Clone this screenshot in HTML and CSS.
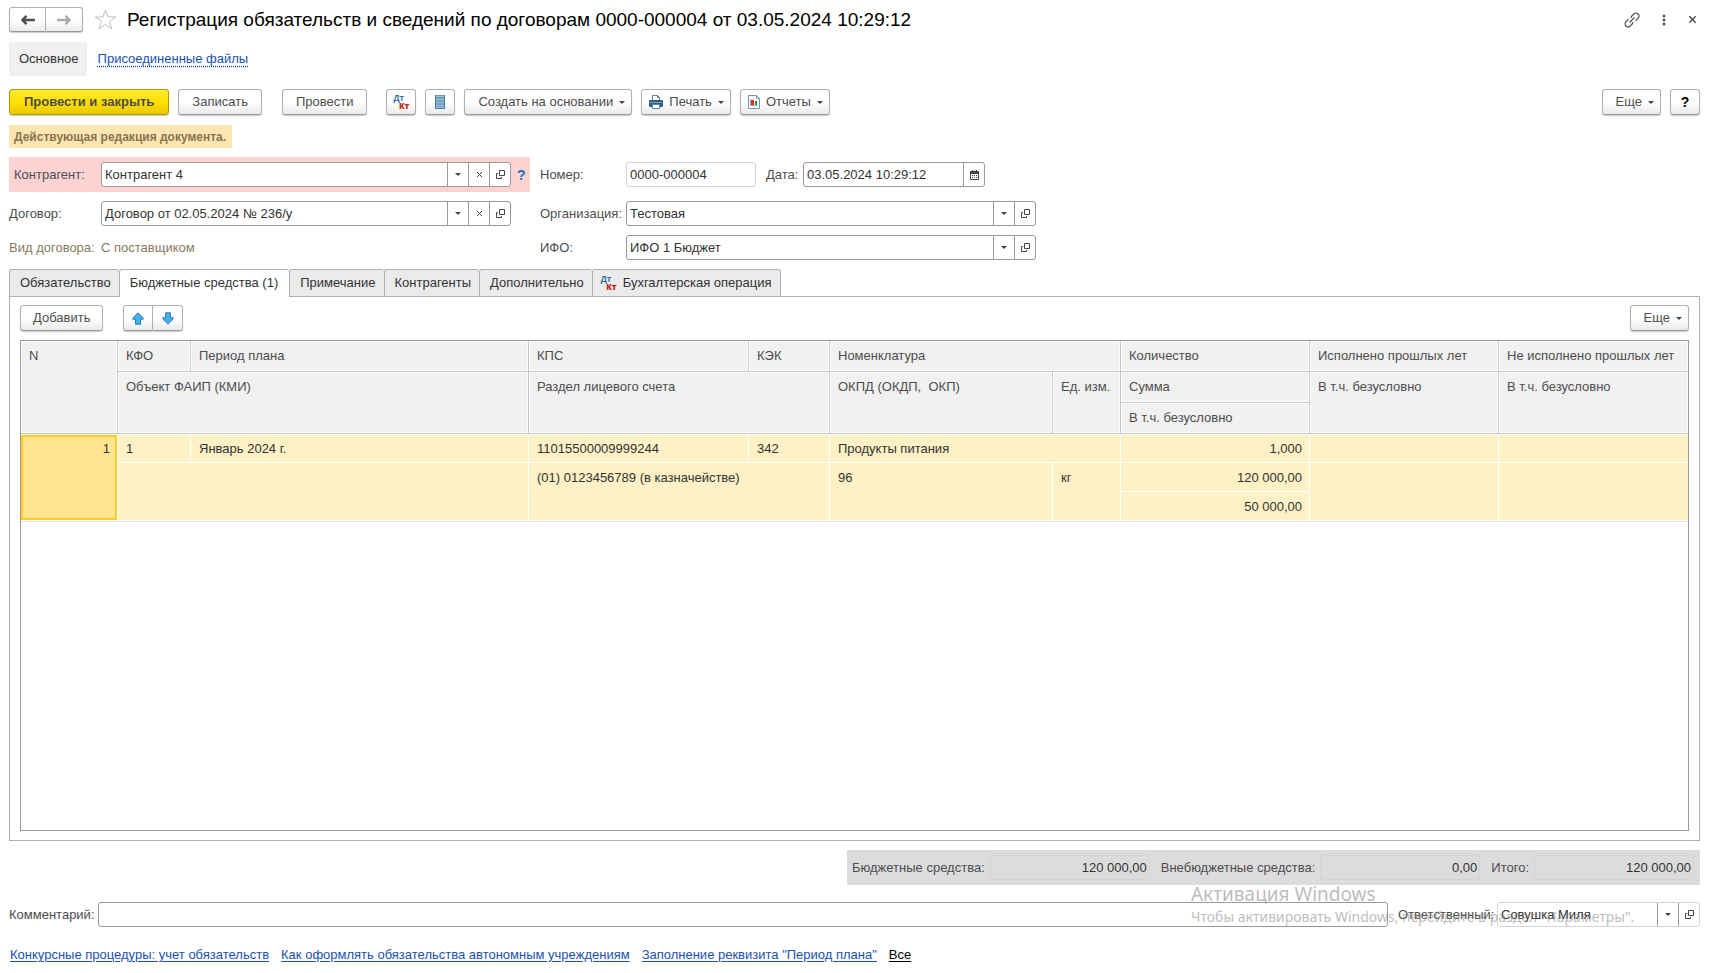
FILE: index.html
```html
<!DOCTYPE html>
<html lang="ru">

<head>
    <meta charset="UTF-8">
    <meta name="viewport" content="width=device-width, initial-scale=1.0">
    <title>Регистрация обязательств и сведений по договорам</title>
    <link rel="stylesheet" href="styles.css">
</head>

<body>
    <!-- icons -->
    <svg class="sprite" aria-hidden="true">
        <symbol id="i-open" viewBox="0 0 11 11">
            <path d="M4.500 1.500h5v5h-5zM3 4.500H1.500v5h5V8" fill="none" stroke="#444" />
        </symbol>
        <symbol id="i-clear" viewBox="0 0 7 7">
            <path d="M1 1l5 5M6 1l-5 5" fill="none" stroke="#444" />
        </symbol>
        <symbol id="i-list" viewBox="0 0 10 14">
            <path d="M0 0h10v14H0z" fill="#4b7ea4" />
            <path d="M1 1.500h8M1 4.500h8M1 7.500h8M1 10.500h8" stroke="#9cc0da" stroke-width="2" />
            <path d="M1 12.500h8" stroke="#9cc0da" />
        </symbol>
        <symbol id="i-print" viewBox="0 0 14 14">
            <path d="M3.500 6V.5h5l2 2V6" fill="#fff" stroke="#5a7f9c" />
            <path d="M8.500 .5v2h2" fill="none" stroke="#5a7f9c" />
            <rect y="5" width="14" height="7" rx="1" fill="#2f6089" />
            <path d="M1 7.500h12" stroke="#7ba3c2" />
            <path d="M3.500 9.500h7v4h-7z" fill="#fff" stroke="#5a7f9c" />
        </symbol>
        <symbol id="i-report" viewBox="0 0 12 14">
            <path d="M.5 .5h8l3 3v10H.5z" fill="#fff" stroke="#7893a8" />
            <path d="M8.500 .5v3h3" fill="none" stroke="#7893a8" />
            <path d="M2.500 4v6.500h7" fill="none" stroke="#9ab" />
            <path d="M3 5h3v5H3z" fill="#f0281e" />
            <path d="M7 6h2v4H7z" fill="#169a2e" />
        </symbol>
        <symbol id="i-calendar" viewBox="0 0 9 10">
            <path d="M.5 1.500h8v8h-8z" fill="#fff" stroke="#444" />
            <path d="M0 1h9v3H0z" fill="#444" />
            <path d="M2.500 0v2M6.500 0v2" stroke="#444" />
            <path d="M2 5.500h5M2 7.500h5" stroke="#444" stroke-dasharray="1 1" />
        </symbol>
        <symbol id="i-up" viewBox="0 0 12 13">
            <path d="M6 .8l5.200 5.400v1H8.500v5h-5v-5H.8v-1z" fill="#45b0ee" stroke="#2d7fb3" />
        </symbol>
        <symbol id="i-back" viewBox="0 0 14 10">
            <path d="M5.500 .8L1.500 5l4 4.200M2 5h12" fill="none" stroke="currentColor" stroke-width="2.400" />
        </symbol>
    </svg>

    <div class="page">
        <header class="header">
            <div class="btn-group nav">
                <button class="btn" aria-label="Назад"><svg width="14" height="10"><use href="#i-back" /></svg></button>
                <button class="btn forward" aria-label="Вперед"><svg width="14" height="10"><use href="#i-back" /></svg></button>
            </div>
            <button class="plain star" aria-label="В избранное">
                <svg width="23" height="23" viewBox="0 0 24 23">
                    <path d="M12 1.500l2.600 7.300 7.900.1-6.300 4.700 2.300 7.700L12 16.800l-6.500 4.500 2.300-7.700-6.300-4.700 7.900-.1z" fill="#fff" stroke="#b4bac2" />
                </svg>
            </button>
            <h1>Регистрация обязательств и сведений по договорам 0000-000004 от 03.05.2024 10:29:12</h1>
            <div class="window-tools">
                <button class="plain" aria-label="Получить ссылку">
                    <svg width="16" height="16" viewBox="0 0 16 16">
                        <g transform="rotate(-45 8 8)" fill="none" stroke="#555" stroke-width="1.200">
                            <path d="M6 5H2.500a3 3 0 0 0-3 3 3 3 0 0 0 3 3H6l1-1M10 11h3.500a3 3 0 0 0 3-3 3 3 0 0 0-3-3H10L9 6M4.500 8h7" />
                        </g>
                    </svg>
                </button>
                <button class="plain" aria-label="Меню">
                    <svg width="4" height="12" viewBox="0 0 4 12" fill="#555">
                        <circle cx="2" cy="2" r="1.500" />
                        <circle cx="2" cy="6" r="1.500" />
                        <circle cx="2" cy="10" r="1.500" />
                    </svg>
                </button>
                <button class="plain" aria-label="Закрыть"><svg width="9" height="9"><use href="#i-clear" /></svg></button>
            </div>
        </header>

        <nav class="sections">
            <span class="current">Основное</span>
            <a href="#files">Присоединенные файлы</a>
        </nav>

        <div class="toolbar">
            <button class="btn primary">Провести и закрыть</button>
            <button class="btn">Записать</button>
            <button class="btn post">Провести</button>
            <button class="btn icon-btn" aria-label="Проводки"><span class="dtkt"><i>Дт</i><b>Кт</b></span></button>
            <button class="btn icon-btn" aria-label="Список"><svg width="10" height="14"><use href="#i-list" /></svg></button>
            <button class="btn menu">Создать на основании</button>
            <button class="btn menu with-icon"><svg width="14" height="14"><use href="#i-print" /></svg>Печать</button>
            <button class="btn menu with-icon"><svg width="12" height="14"><use href="#i-report" /></svg>Отчеты</button>
            <button class="btn menu push">Еще</button>
            <button class="btn icon-btn help">?</button>
        </div>

        <div class="notice">Действующая редакция документа.</div>

        <div class="fields">
            <div class="col-left">
                <div class="row required">
                    <label for="contractor">Контрагент:</label>
                    <div class="field">
                        <input id="contractor" type="text" value="Контрагент 4">
                        <button class="drop" aria-label="Выбрать"></button>
                        <button aria-label="Очистить"><svg width="7" height="7"><use href="#i-clear" /></svg></button>
                        <button aria-label="Открыть"><svg width="11" height="11"><use href="#i-open" /></svg></button>
                    </div>
                    <button class="plain hint">?</button>
                </div>
                <div class="row">
                    <label for="contract">Договор:</label>
                    <div class="field">
                        <input id="contract" type="text" value="Договор от 02.05.2024 № 236/у">
                        <button class="drop" aria-label="Выбрать"></button>
                        <button aria-label="Очистить"><svg width="7" height="7"><use href="#i-clear" /></svg></button>
                        <button aria-label="Открыть"><svg width="11" height="11"><use href="#i-open" /></svg></button>
                    </div>
                </div>
                <div class="row kind">
                    <span class="kind-label">Вид договора:</span>
                    <span>С поставщиком</span>
                </div>
            </div>
            <div class="col-right">
                <div class="row">
                    <label for="number">Номер:</label>
                    <div class="field short light"><input id="number" type="text" value="0000-000004"></div>
                    <label class="date-label" for="date">Дата:</label>
                    <div class="field date">
                        <input id="date" type="text" value="03.05.2024 10:29:12">
                        <button aria-label="Календарь"><svg width="9" height="10"><use href="#i-calendar" /></svg></button>
                    </div>
                </div>
                <div class="row">
                    <label for="org">Организация:</label>
                    <div class="field">
                        <input id="org" type="text" value="Тестовая">
                        <button class="drop" aria-label="Выбрать"></button>
                        <button aria-label="Открыть"><svg width="11" height="11"><use href="#i-open" /></svg></button>
                    </div>
                </div>
                <div class="row">
                    <label for="ifo">ИФО:</label>
                    <div class="field">
                        <input id="ifo" type="text" value="ИФО 1 Бюджет">
                        <button class="drop" aria-label="Выбрать"></button>
                        <button aria-label="Открыть"><svg width="11" height="11"><use href="#i-open" /></svg></button>
                    </div>
                </div>
            </div>
        </div>

        <div class="tabs" role="tablist">
            <button class="tab" role="tab">Обязательство</button>
            <button class="tab active" role="tab" aria-selected="true">Бюджетные средства (1)</button>
            <button class="tab" role="tab">Примечание</button>
            <button class="tab" role="tab">Контрагенты</button>
            <button class="tab" role="tab">Дополнительно</button>
            <button class="tab" role="tab"><span class="dtkt"><i>Дт</i><b>Кт</b></span>Бухгалтерская операция</button>
        </div>

        <main class="panel">
            <div class="panel-bar">
                <button class="btn add">Добавить</button>
                <div class="btn-group move">
                    <button class="btn" aria-label="Вверх"><svg width="12" height="13"><use href="#i-up" /></svg></button>
                    <button class="btn down" aria-label="Вниз"><svg width="12" height="13"><use href="#i-up" /></svg></button>
                </div>
                <button class="btn menu push">Еще</button>
            </div>

            <div class="grid-box">
                <table class="grid">
                    <colgroup>
                        <col class="c-n">
                        <col class="c-kfo">
                        <col class="c-period">
                        <col class="c-kps">
                        <col class="c-kek">
                        <col class="c-okpd">
                        <col class="c-unit">
                        <col class="c-sum">
                        <col class="c-sum">
                        <col class="c-sum">
                    </colgroup>
                    <thead>
                        <tr>
                            <th rowspan="3">N</th>
                            <th>КФО</th>
                            <th>Период плана</th>
                            <th>КПС</th>
                            <th>КЭК</th>
                            <th colspan="2">Номенклатура</th>
                            <th>Количество</th>
                            <th>Исполнено прошлых лет</th>
                            <th class="last">Не исполнено прошлых лет</th>
                        </tr>
                        <tr>
                            <th colspan="2" rowspan="2">Объект ФАИП (КМИ)</th>
                            <th colspan="2" rowspan="2">Раздел лицевого счета</th>
                            <th rowspan="2">ОКПД (ОКДП,&nbsp; ОКП)</th>
                            <th rowspan="2">Ед. изм.</th>
                            <th>Сумма</th>
                            <th rowspan="2">В т.ч. безусловно</th>
                            <th class="last" rowspan="2">В т.ч. безусловно</th>
                        </tr>
                        <tr>
                            <th>В т.ч. безусловно</th>
                        </tr>
                    </thead>
                    <tbody>
                        <tr>
                            <td class="num selected" rowspan="3">1</td>
                            <td>1</td>
                            <td>Январь 2024 г.</td>
                            <td>11015500009999244</td>
                            <td>342</td>
                            <td colspan="2">Продукты питания</td>
                            <td class="num">1,000</td>
                            <td></td>
                            <td class="last"></td>
                        </tr>
                        <tr>
                            <td colspan="2" rowspan="2"></td>
                            <td colspan="2" rowspan="2">(01) 0123456789 (в казначействе)</td>
                            <td rowspan="2">96</td>
                            <td rowspan="2">кг</td>
                            <td class="num">120 000,00</td>
                            <td rowspan="2"></td>
                            <td class="last" rowspan="2"></td>
                        </tr>
                        <tr>
                            <td class="num">50 000,00</td>
                        </tr>
                    </tbody>
                </table>
            </div>
        </main>

        <div class="totals">
            <label for="budget">Бюджетные средства:</label>
            <input id="budget" type="text" value="120 000,00" readonly>
            <label for="extra">Внебюджетные средства:</label>
            <input id="extra" type="text" value="0,00" readonly>
            <label for="total">Итого:</label>
            <input id="total" type="text" value="120 000,00" readonly>
        </div>

        <div class="bottom">
            <label for="comment">Комментарий:</label>
            <div class="field comment"><input id="comment" type="text"></div>
            <label class="resp-label" for="resp">Ответственный:</label>
            <div class="field resp light">
                <input id="resp" type="text" value="Совушка Миля">
                <button class="drop" aria-label="Выбрать"></button>
                <button aria-label="Открыть"><svg width="11" height="11"><use href="#i-open" /></svg></button>
            </div>
        </div>

        <footer class="links">
            <a href="#1">Конкурсные процедуры: учет обязательств</a>
            <a href="#2">Как оформлять обязательства автономным учреждениям</a>
            <a href="#3">Заполнение реквизита "Период плана"</a>
            <a class="all" href="#all">Все</a>
        </footer>

        <div class="watermark">
            <div class="wm-title">Активация Windows</div>
            <div>Чтобы активировать Windows, перейдите в раздел "Параметры".</div>
        </div>
    </div>
</body>

</html>
```
FILE: styles.css
```css
* {
    margin: 0;
    padding: 0;
    box-sizing: border-box;
}

body {
    background-color: #fff;
    color: #4d4d4d;
    font-family: "Liberation Sans", Arial, sans-serif;
    font-size: 13px;
    line-height: 16px;
}

button,
input {
    font: inherit;
    color: inherit;
}

svg {
    display: block;
    flex: none;
}

.sprite {
    position: absolute;
    width: 0;
    height: 0;
}

.page {
    position: relative;
    display: flex;
    flex-direction: column;
    min-height: 100vh;
    padding: 7px 16px 10px 9px;
}

/* buttons */

.btn {
    display: flex;
    align-items: center;
    justify-content: center;
    height: 26px;
    padding: 0 13px;
    border: 1px solid #b0b0b0;
    border-bottom-color: #999;
    border-radius: 3px;
    background: linear-gradient(#fff 50%, #ebebeb);
    box-shadow: 0 1px 1px #ccc;
    white-space: nowrap;
}

.primary {
    padding: 0 14px;
    border-color: #b09a00;
    background: linear-gradient(#ffe933, #ffe000 50%, #e8c800);
    font-weight: bold;
}

.plain {
    display: flex;
    align-items: center;
    border: none;
    background: none;
}

.icon-btn {
    width: 30px;
    padding: 0;
}

.menu {
    padding-right: 6px;
}

.menu::after,
.drop::after {
    content: "";
    border: 3px solid transparent;
    border-top-color: #444;
    border-bottom: none;
}

.menu::after {
    margin-left: 6px;
}

.with-icon {
    gap: 6px;
    padding-left: 7px;
}

.with-icon::after {
    margin-left: 0;
}

.help {
    color: #000;
    font-size: 14px;
    font-weight: bold;
}

.push {
    margin-left: auto;
}

.btn-group {
    display: flex;
}

.btn-group .btn {
    padding: 0;
    border-radius: 3px 0 0 3px;
}

.btn-group .btn + .btn {
    border-left: none;
    border-radius: 0 3px 3px 0;
}

/* Дт / Кт icon */

.dtkt {
    display: flex;
    flex-direction: column;
    width: 16px;
    font-family: "Open Sans", sans-serif;
    font-size: 8px;
    line-height: 8px;
    font-weight: bold;
    text-align: left;
}

.dtkt i {
    color: #2f6f9f;
    font-style: normal;
}

.dtkt b {
    align-self: flex-end;
    color: #c81e0f;
}

/* header */

.header {
    display: flex;
    align-items: center;
    height: 25px;
}

.nav .btn {
    width: 37px;
    height: 25px;
}

.forward {
    color: #aaa;
}

.forward svg,
.down svg {
    transform: rotate(180deg);
}

.star {
    margin: 0 10px 0 11px;
}

h1 {
    color: #000;
    font-size: 19px;
    font-weight: normal;
    line-height: 24px;
}

.window-tools {
    display: flex;
    align-items: center;
    gap: 22px;
    margin-left: auto;
    padding-right: 3px;
}

.sections {
    display: flex;
    align-items: center;
    gap: 11px;
    margin-top: 10px;
}

.current {
    padding: 9px 8px 9px 10px;
    border-radius: 3px;
    background-color: #f0f0f0;
    color: #333;
}

.sections a {
    color: #1a51b0;
    text-decoration: underline dotted;
    text-underline-offset: 3px;
}

.toolbar {
    display: flex;
    gap: 9px;
    margin-top: 13px;
}

.post {
    margin: 0 10px 0 11px;
}

.notice {
    align-self: flex-start;
    margin-top: 10px;
    padding: 4px 6px 3px 5px;
    background-color: #ffe5b0;
    color: #857550;
    font-size: 12px;
    font-weight: bold;
}

/* document fields */

.fields {
    display: flex;
    margin-top: 9px;
}

.col-left {
    width: 521px;
}

.col-right {
    width: 506px;
    padding-left: 10px;
}

.row {
    display: flex;
    align-items: center;
    height: 25px;
    margin-bottom: 9px;
}

.row label,
.kind-label {
    flex: none;
    width: 92px;
}

.col-left .field {
    width: 410px;
}

.required {
    height: 35px;
    padding-left: 5px;
    background-color: #fbd3d3;
}

.required label {
    width: 87px;
}

.hint {
    margin-left: 6px;
    color: #1a6fb5;
    font-size: 14px;
    font-weight: bold;
}

.kind {
    color: #857b5c;
}

.col-right .row label {
    width: 86px;
}

.col-right .row:first-child {
    height: 35px;
}

.col-right .row .date-label {
    width: 37px;
    margin-left: 10px;
}

.field {
    display: flex;
    flex: 1;
    height: 25px;
    border: 1px solid #999;
    border-radius: 3px;
    background-color: #fff;
}

.col-left .field,
.short,
.date,
.resp {
    flex: none;
}

.field input {
    flex: 1;
    min-width: 0;
    padding: 0 3px;
    border: none;
    background: none;
    color: #333;
}

.field button {
    display: flex;
    align-items: center;
    justify-content: center;
    width: 21px;
    border: none;
    border-left: 1px solid #999;
    background: none;
}

.light {
    border-color: #d4d4d4;
}

.col-right .short {
    flex: none;
    width: 130px;
}

.col-right .date {
    flex: none;
    width: 182px;
}

/* tabs */

.tabs {
    display: flex;
}

.tab {
    display: flex;
    align-items: center;
    gap: 6px;
    height: 27px;
    padding: 0 8px 0 10px;
    border: 1px solid #b0b0b0;
    border-right: none;
    border-bottom: none;
    border-radius: 3px 3px 0 0;
    background-color: #ebebeb;
    color: #333;
    white-space: nowrap;
}

.tab:last-child {
    border-right: 1px solid #b0b0b0;
}

.tab .dtkt {
    margin-left: -2px;
}

.tab.active {
    height: 28px;
    margin-bottom: -1px;
    padding: 0 11px 1px 10px;
    background-color: #fff;
    z-index: 1;
}

.panel {
    display: flex;
    flex: 1;
    flex-direction: column;
    padding: 8px 10px 9px;
    border: 1px solid #b0b0b0;
}

.panel-bar {
    display: flex;
    margin-bottom: 9px;
}

.add {
    padding: 0 12px;
}

.move {
    margin-left: 20px;
}

.move .btn {
    width: 30px;
}

.grid-box {
    flex: 1;
    border: 1px solid #999;
}

.grid {
    width: 100%;
    table-layout: fixed;
    border-spacing: 0;
    border-bottom: 1px solid #e0e0e0;
}

.c-n {
    width: 97px;
}

.c-kfo {
    width: 73px;
}

.c-period {
    width: 338px;
}

.c-kps {
    width: 220px;
}

.c-kek {
    width: 81px;
}

.c-okpd {
    width: 223px;
}

.c-unit {
    width: 68px;
}

.c-sum {
    width: 189px;
}

.grid th,
.grid td {
    padding: 7px 7px 0 8px;
    text-align: left;
    vertical-align: top;
    white-space: nowrap;
}

.grid th {
    height: 31px;
    border-right: 1px solid #c8c8c8;
    border-bottom: 1px solid #c8c8c8;
    background-color: #f1f1f1;
    box-shadow: inset 0 0 0 1px #fff;
    font-weight: normal;
}

.grid td {
    height: 29px;
    border-right: 1px solid #fff;
    border-bottom: 1px solid #fff;
    background-color: #fdf1c5;
    color: #333;
}

.grid tbody tr:first-child td {
    border-top: 1px solid #fff;
    padding-top: 6px;
}

.grid .last {
    border-right: none;
}

.grid td.num {
    text-align: right;
}

.grid td.selected {
    background-color: #ffe58f;
    box-shadow: inset 0 0 0 2px #ffcc1f;
}

/* totals and comment */

.totals {
    display: flex;
    align-items: center;
    align-self: flex-end;
    margin-top: 9px;
    padding: 5px 6px 5px 5px;
    background-color: #dcdcdc;
}

.totals input {
    width: 160px;
    height: 25px;
    margin: 0 11px 0 5px;
    padding: 0 2px;
    border: 1px solid #d4d4d4;
    border-radius: 3px;
    background: none;
    color: #333;
    text-align: right;
}

.totals input:last-child {
    margin-right: 0;
}

.bottom {
    display: flex;
    align-items: center;
    margin-top: 17px;
}

.bottom label {
    width: 89px;
}

.bottom .resp-label {
    width: 99px;
    margin-left: 10px;
}

.bottom .resp {
    flex: none;
    width: 203px;
}

.links {
    display: flex;
    gap: 12px;
    margin-top: 20px;
    padding-left: 1px;
}

.links a {
    color: #1a51b0;
    text-underline-offset: 2px;
}

.links .all {
    color: #000;
}

/* system overlay */

.watermark {
    position: absolute;
    right: 70px;
    bottom: 46px;
    width: 455px;
    color: rgba(130, 130, 130, 0.55);
    font-family: "Noto Sans", sans-serif;
    font-size: 14px;
    line-height: 20px;
    white-space: nowrap;
    pointer-events: none;
}

.wm-title {
    font-size: 19px;
    line-height: 25px;
}
```
